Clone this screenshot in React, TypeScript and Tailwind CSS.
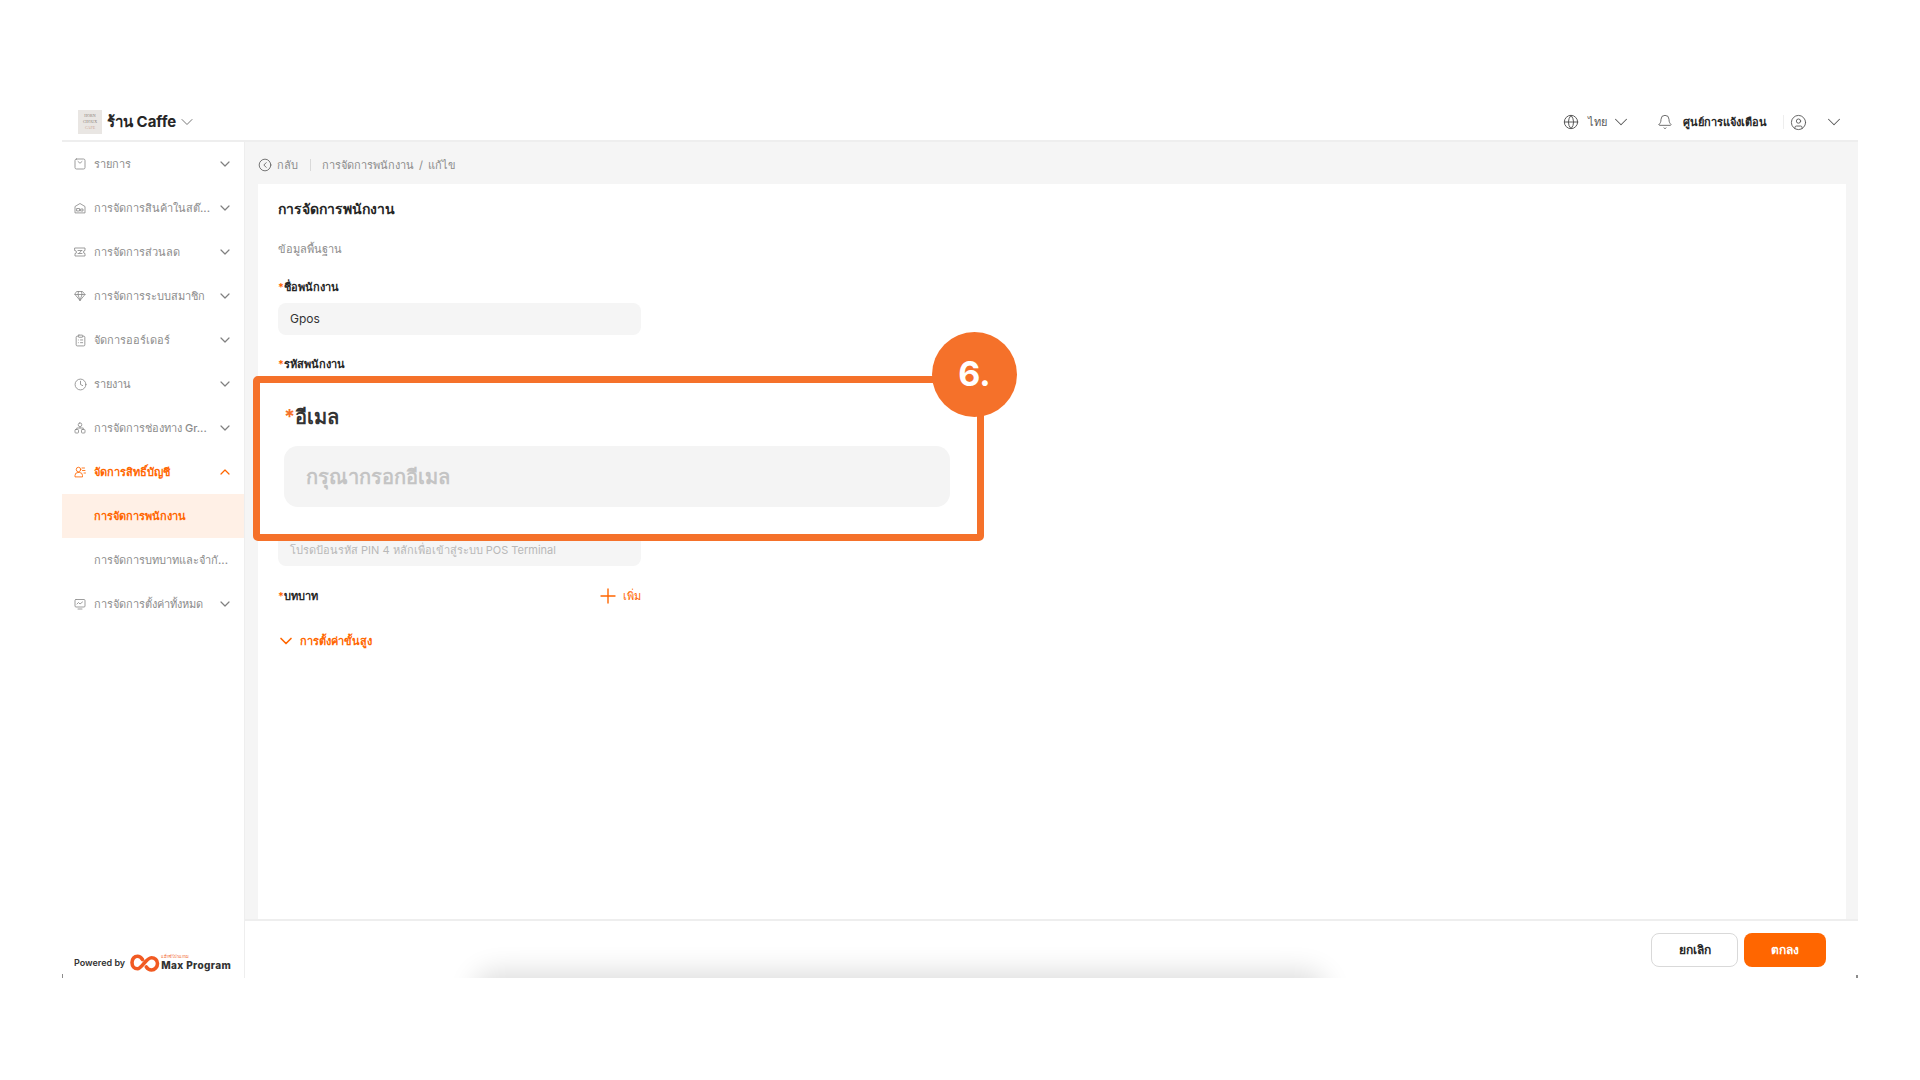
import React from 'react';
import { ChevronDown, ChevronUp, CircleChevronLeft, CircleUser, Bell, Globe, Plus, Clock, ClipboardList } from 'lucide-react';

const iconBase = { width: 12, height: 12, viewBox: '0 0 24 24', fill: 'none', stroke: 'currentColor', strokeWidth: 1.7, strokeLinecap: 'round' as const, strokeLinejoin: 'round' as const };

const ListIcon = () => (
  <svg {...iconBase}>
    <rect x="2" y="2" width="20" height="20" rx="3" />
    <path d="M8 7l4 3.5L16 7" />
  </svg>
);
const StoreIcon = () => (
  <svg {...iconBase}>
    <path d="M2 21V9l10-6 10 6v12z" />
    <path d="M6 13h5v5H6zM14 14h4v4h-4z" />
  </svg>
);
const DiscountIcon = () => (
  <svg {...iconBase}>
    <path d="M2 4h20v5a3 3 0 0 0 0 6v5H2v-5a3 3 0 0 0 0-6z" />
    <path d="M8 9h8M8 15h8M15 9l-5 6" />
  </svg>
);
const MemberIcon = () => (
  <svg {...iconBase}>
    <path d="M6 3h11l5 6-10 12L2 9z" />
    <path d="M2 9h20M8 9l4 12M16 9l-4 12M9 3L8 9M15 3l1 6" />
  </svg>
);
const ChannelIcon = () => (
  <svg {...iconBase}>
    <rect x="8.5" y="2" width="7" height="7" rx="3" />
    <rect x="2" y="15" width="7" height="7" rx="1.5" />
    <rect x="15" y="15" width="7" height="7" rx="1.5" />
    <path d="M12 9v3M5.5 15v-3h13v3" />
  </svg>
);
const AccountIcon = () => (
  <svg {...iconBase}>
    <circle cx="9" cy="7" r="4.5" />
    <path d="M2 21v-2a6 6 0 0 1 6-6h3a6 6 0 0 1 6 6v2zM16 4h5M17 9h5M20 14h3" />
  </svg>
);
const SettingIcon = () => (
  <svg {...iconBase}>
    <rect x="2" y="3" width="20" height="15" rx="2" />
    <path d="M6 12l3-3 3 3 5-4M8 22h8" />
  </svg>
);

const menu = [
  { label: 'รายการ', icon: <ListIcon /> },
  { label: 'การจัดการสินค้าในสต๊...', icon: <StoreIcon /> },
  { label: 'การจัดการส่วนลด', icon: <DiscountIcon /> },
  { label: 'การจัดการระบบสมาชิก', icon: <MemberIcon /> },
  { label: 'จัดการออร์เดอร์', icon: <ClipboardList size={13} strokeWidth={1.6} /> },
  { label: 'รายงาน', icon: <Clock size={13} strokeWidth={1.6} /> },
  { label: 'การจัดการช่องทาง Gr...', icon: <ChannelIcon /> },
];

const MenuRow = ({ label, icon }: { label: string; icon: React.ReactNode }) => (
  <div className="flex h-11 items-center pl-[11px] pr-[11px] text-[#8c8c8c]">
    <span className="flex w-[14px] shrink-0 justify-center">{icon}</span>
    <span className="ml-[7px] min-w-0 flex-1 whitespace-nowrap text-[11px] font-medium">{label}</span>
    <ChevronDown size={16} strokeWidth={1.8} className="shrink-0 text-[#808080]" />
  </div>
);

const Label = ({ text }: { text: string }) => (
  <div className="text-[11px] font-semibold leading-4 text-[#262626]">
    <span className="text-[#ff6600]">*</span>
    {text}
  </div>
);

const Field = ({ text, placeholder }: { text?: string; placeholder?: boolean }) => (
  <div className={`mt-2 flex h-8 w-[363px] items-center rounded-lg bg-[#f5f5f5] px-3 ${placeholder ? 'text-[11px] text-[#b8b8b8]' : 'text-[12px] text-[#333]'}`}>
    <span className="whitespace-nowrap">{text}</span>
  </div>
);

const InfinityLogo = () => (
  <svg width="30" height="18" viewBox="0 0 30 18" fill="none" stroke="#f15a22" strokeWidth="3.6" strokeLinecap="round">
    <path d="M12.5 5.5C11 3.2 9.5 2.2 7.5 2.2 4.4 2.2 2 5 2 8.5s2.4 6.3 5.5 6.3c4.5 0 8.5-11 14-11C24.8 3.800 27.500 6 27.500 9.500S24.800 16 21.500 16c-2.400 0-4-1.300-5.200-3" />
  </svg>
);

export default function App() {
  return (
    <div className="h-[1080px] w-full bg-white pl-[62px] pr-[62px] pt-[100px] font-['Inter','Noto_Sans',sans-serif]">
      <div className="relative flex h-[878px] flex-col overflow-hidden bg-white">
        {/* Top bar */}
        <header className="flex h-[42px] shrink-0 items-center justify-between border-b-2 border-[#eeeeee] pl-4 pr-[13px] pt-1">
          <div className="flex items-center">
            <div className="flex h-6 w-6 flex-col items-center justify-center bg-[#e9e6e3] font-['Liberation_Serif',serif] text-[4px] leading-[6px] text-[#8a7f78]">
              <span>HORN</span>
              <span>CHOUX</span>
              <span className="text-[#c9a58f]">CAFE</span>
            </div>
            <span className="ml-[5px] text-[15px] font-bold text-[#262626]">ร้าน Caffe</span>
            <ChevronDown size={20} strokeWidth={1.2} className="ml-px text-[#777]" />
          </div>
          <div className="flex items-center text-[#595959]">
            <Globe size={16} strokeWidth={1.5} />
            <span className="ml-[9px] text-[11px]">ไทย</span>
            <ChevronDown size={22} strokeWidth={1.1} className="ml-[3px]" />
            <Bell size={16} strokeWidth={1.3} className="ml-[25px]" />
            <span className="ml-[10px] text-[11px] font-bold text-[#262626]">ศูนย์การแจ้งเตือน</span>
            <span className="ml-4 h-[14px] w-px bg-[#eeeeee]" />
            <CircleUser size={17} strokeWidth={1.3} className="ml-[6px]" />
            <ChevronDown size={22} strokeWidth={1.1} className="ml-[16px]" />
          </div>
        </header>

        <div className="flex min-h-0 flex-1">
          {/* Sidebar */}
          <aside className="flex w-[183px] shrink-0 flex-col border-r border-[#eeeeee] bg-white">
            {menu.map((m) => (
              <MenuRow key={m.label} label={m.label} icon={m.icon} />
            ))}
            <div className="flex h-11 items-center pl-[11px] pr-[11px] text-[#ff6600]">
              <span className="flex w-[14px] shrink-0 justify-center"><AccountIcon /></span>
              <span className="ml-[7px] flex-1 text-[11px] font-semibold">จัดการสิทธิ์บัญชี</span>
              <ChevronUp size={16} strokeWidth={1.8} />
            </div>
            <div className="flex h-11 items-center bg-[#fff0e6] pl-8 text-[11px] font-semibold text-[#ff6600]">การจัดการพนักงาน</div>
            <div className="flex h-11 items-center whitespace-nowrap pl-8 text-[11px] font-medium text-[#8c8c8c]">การจัดการบทบาทและจำกั...</div>
            <MenuRow label="การจัดการตั้งค่าทั้งหมด" icon={<SettingIcon />} />
            <div className="mt-auto flex items-center pb-[6px] pl-3">
              <span className="text-[9px] font-semibold text-[#333]">Powered by</span>
              <span className="ml-[5px]"><InfinityLogo /></span>
              <div className="ml-px flex flex-col">
                <span className="h-[4px] text-[4px] leading-[4px] text-[#f15a22]">แม็กซ์โปรแกรม</span>
                <span className="text-[10px] font-extrabold leading-[12px] tracking-[0.4px] text-[#333]">Max Program</span>
              </div>
            </div>
          </aside>

          {/* Main column */}
          <main className="flex min-w-0 flex-1 flex-col">
            <div className="flex min-h-0 flex-1 flex-col bg-[#f5f5f5] pl-[13px] pr-3">
              <div className="flex h-[42px] shrink-0 items-center pt-1 text-[11px] text-[#8c8c8c]">
                <CircleChevronLeft size={14} strokeWidth={1.4} className="text-[#595959]" />
                <span className="ml-[5px]">กลับ</span>
                <span className="ml-3 h-[12px] w-px bg-[#d9d9d9]" />
                <span className="ml-[11px]">การจัดการพนักงาน</span>
                <span className="mx-[5px]">/</span>
                <span>แก้ไข</span>
              </div>
              <div className="flex-1 bg-white pl-5 pt-[13px]">
                <h1 className="text-[14px] font-bold leading-6 text-[#262626]">การจัดการพนักงาน</h1>
                <p className="mt-5 text-[11px] leading-4 text-[#8c8c8c]">ข้อมูลพื้นฐาน</p>
                <div className="mt-[22px]"><Label text="ชื่อพนักงาน" /></div>
                <Field text="Gpos" />
                <div className="mt-[21px]"><Label text="รหัสพนักงาน" /></div>
                <Field />
                <div className="mt-[21px]"><Label text="อีเมล" /></div>
                <Field />
                <div className="mt-[21px]"><Label text="รหัส PIN" /></div>
                <Field text="โปรดป้อนรหัส PIN 4 หลักเพื่อเข้าสู่ระบบ POS Terminal" placeholder />
                <div className="mt-[22px] flex w-[363px] items-center justify-between">
                  <Label text="บทบาท" />
                  <div className="flex h-4 items-center text-[11px] text-[#ff6600]">
                    <Plus size={24} strokeWidth={1.4} />
                    <span className="ml-[3px]">เพิ่ม</span>
                  </div>
                </div>
                <div className="-ml-[2px] mt-[27px] flex items-center text-[11px] font-semibold text-[#ff6600]">
                  <ChevronDown size={20} strokeWidth={2} />
                  <span className="ml-[4px]">การตั้งค่าขั้นสูง</span>
                </div>
              </div>
            </div>
            <footer className="flex h-[59px] shrink-0 items-start justify-end gap-[6px] border-t-2 border-[#eeeeee] pr-8 pt-3">
              <button className="h-[34px] w-[87px] rounded-lg border border-[#d9d9d9] bg-white text-[12px] font-semibold text-[#262626]">ยกเลิก</button>
              <button className="h-[34px] w-[82px] rounded-lg bg-[#ff6600] text-[12px] font-semibold text-white">ตกลง</button>
            </footer>
          </main>
        </div>

        {/* soft shadow rising from the bottom edge */}
        <div className="pointer-events-none absolute bottom-[-30px] left-[418px] h-[30px] w-[840px] rounded-[20px] shadow-[0_0_28px_6px_rgba(0,0,0,0.14)]" />

        {/* clipped corner marks of the captured window */}
        <span className="absolute bottom-0 left-0 h-[4px] w-px bg-[#8c8c8c]" />
        <span className="absolute bottom-0 right-0 h-[3px] w-[2px] bg-[#8c8c8c]" />

        {/* Callout over the form */}
        <div className="absolute left-[191px] top-[276px] h-[165px] w-[731px] rounded-[5px] border-[7px] border-[#f5712a] bg-white">
          <div className="ml-[24px] mt-[14px] text-[20px] font-bold leading-[40px] text-[#333]">
            <span className="text-[#f5712a]">*</span>อีเมล
          </div>
          <div className="ml-[24px] mt-[9px] flex h-[61px] w-[666px] items-center rounded-[14px] bg-[#f4f4f4] pl-[22px] text-[20px] font-semibold text-[#c4c4c4]">กรุณากรอกอีเมล</div>
        </div>
        <div className="absolute left-[870px] top-[232px] flex h-[85px] w-[85px] items-center justify-center rounded-full bg-[#f5712a] pb-[2px] text-[34px] font-bold text-white">6.</div>
      </div>
    </div>
  );
}
